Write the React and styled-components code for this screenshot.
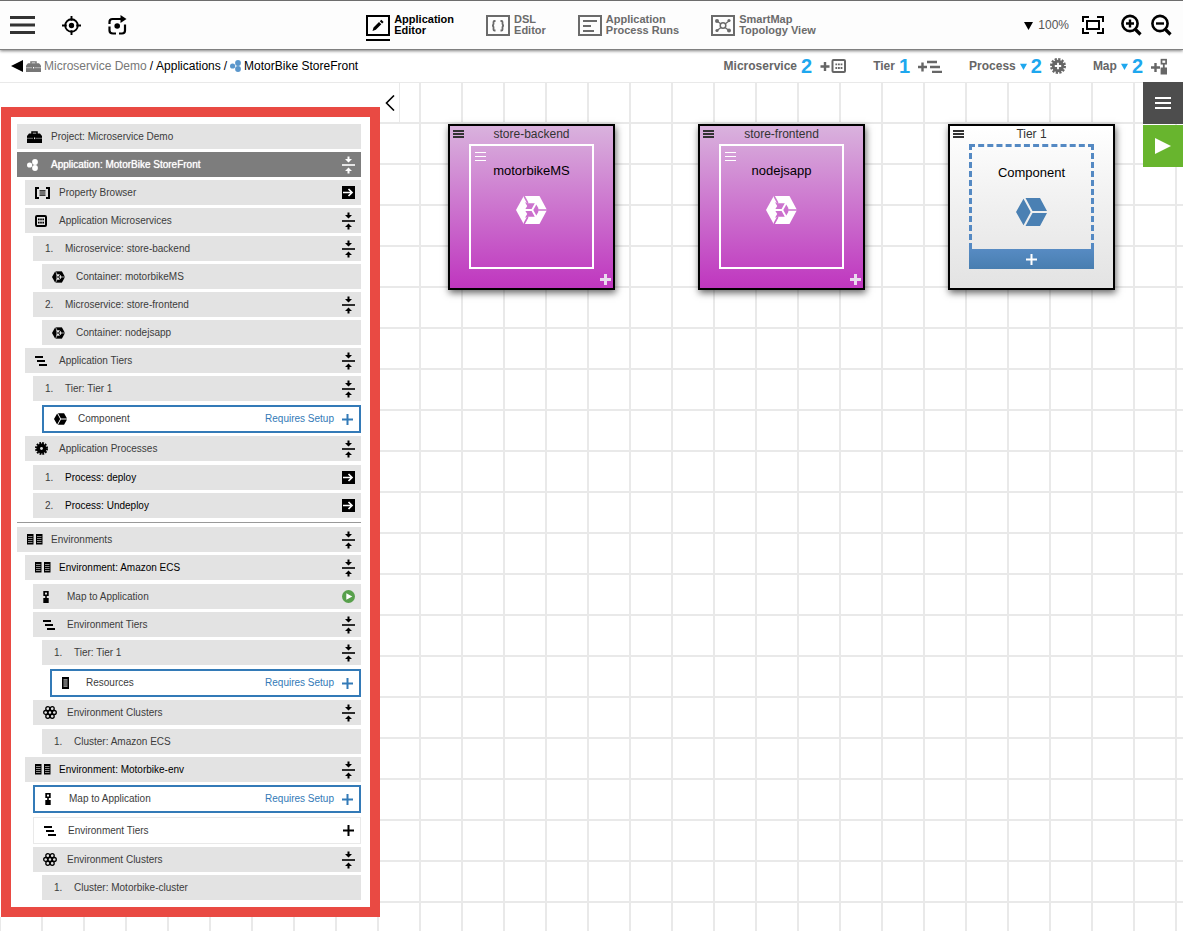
import * as React from "react"
import styled, { createGlobalStyle, css } from "styled-components"

const GlobalStyle = createGlobalStyle`
  :root {
    --color-line: #e9e9e9;
    --color-row: #e3e3e3;
    --color-blue: #337ab7;
    --color-count: #1ea7ee;
    --color-frame: #e94a43;
  }
  * {
    box-sizing: border-box;
  }
  body {
    margin: 0;
    background: #fff;
    font-family: "Liberation Sans", Arial, sans-serif;
    font-size: 12px;
    color: #000;
  }
  button {
    font: inherit;
    color: inherit;
    background: transparent;
    border: none;
    padding: 0px;
    cursor: pointer;
  }
  a {
    color: inherit;
    text-decoration: none;
  }
  svg {
    display: block;
    flex: none;
  }
`

const Page = styled.div`
  display: flex;
  flex-direction: column;
  min-height: 100vh;
`

/* ---------- top bar ---------- */

const TopBar = styled.header`
  display: grid;
  grid-template-columns: 1fr auto 1fr;
  align-items: center;
  height: 50px;
  padding: 0px 11px 0px 10px;
  background: #fdfdfd;
  border-top: 1px solid #6d6d6d;
  border-bottom: 1px solid #808080;
  box-shadow: 0px 1px 3px rgba(0, 0, 0, 0.5);
  position: relative;
  z-index: 2;
`

const TopGroup = styled.div`
  display: flex;
  align-items: center;
  gap: ${props => props.$gap}px;
  justify-content: ${props => (props.$end ? "flex-end" : "flex-start")};
`

const IconButton = styled.button`
  display: flex;
  align-items: center;
  justify-content: center;
`

const Tabs = styled.nav`
  display: flex;
  align-items: flex-start;
  gap: 32px;
`

const Tab = styled.a`
  display: flex;
  align-items: flex-start;
  gap: 4px;
  height: 24px;
  padding-top: 1px;
  font-size: 11px;
  font-weight: bold;
  line-height: 11px;
  white-space: pre-line;
  color: ${props => (props.$active ? "#000" : "#6b6b6b")};
`

const TabIcon = styled.span`
  padding: 1px 0px 3px 0px;
  border-bottom: 2px solid ${props => (props.$active ? "#000" : "transparent")};
`

const ZoomButton = styled.button`
  display: flex;
  align-items: center;
  gap: 5px;
  color: #555;
`

/* ---------- sub bar ---------- */

const SubBar = styled.div`
  display: flex;
  align-items: center;
  justify-content: space-between;
  height: 32px;
  padding: 0px 16px 0px 11px;
  background: #fff;
`

const Crumbs = styled.nav`
  display: flex;
  align-items: center;
  gap: 3px;
`

const Crumb = styled.a`
  display: flex;
  align-items: center;
  gap: 3px;
  color: ${props => (props.$muted ? "#777" : "#000")};
`

const Counters = styled.div`
  display: flex;
  align-items: center;
  gap: 27px;
`

const Counter = styled.button`
  display: flex;
  align-items: center;
  gap: 4px;
  height: 24px;
  font-weight: bold;
  color: #666;
  svg:last-child {
    margin-left: 4px;
  }
`

const Count = styled.span`
  font-size: 20px;
  line-height: 20px;
  color: var(--color-count);
`

/* ---------- canvas ---------- */

const Canvas = styled.main`
  flex: 1;
  display: flex;
  align-items: flex-start;
  background-color: #fff;
  background-image: linear-gradient(var(--color-line) 2px, transparent 2px),
    linear-gradient(90deg, var(--color-line) 2px, transparent 2px);
  background-size: 42px 41px;
  background-position: -1px -1px;
`

const Sidebar = styled.aside`
  flex: none;
  display: flex;
  align-items: flex-start;
`

const SidebarColumn = styled.div`
  width: 380px;
  padding: 24px 0px 0px 1px;
  background: #fff;
  border-top: 1px solid var(--color-line);
`

const CollapseButton = styled.button`
  display: flex;
  align-items: center;
  justify-content: center;
  width: 20px;
  height: 40px;
  background: #fff;
  border-top: 1px solid var(--color-line);
  border-right: 1px solid var(--color-line);
`

const Frame = styled.div`
  border: 10px solid var(--color-frame);
  padding: 7px 9px 7px 6px;
`

const Tree = styled.ul`
  list-style: none;
  margin: 0px;
  padding: 0px;
  display: flex;
  flex-direction: column;
  gap: 3px;
`

const indents = [0, 8, 16, 25, 33]

const rowKinds = {
  plain: css`
    height: 25px;
    background: var(--color-row);
    color: #3c3c3c;
  `,
  active: css`
    height: 25px;
    background: #7d7d7d;
    color: #fff;
    text-shadow: 0px 0px 1px #fff;
  `,
  setup: css`
    height: 28px;
    background: #fff;
    border: 2px solid var(--color-blue);
    color: #3c3c3c;
  `,
  empty: css`
    height: 27px;
    background: #fff;
    border: 1px solid var(--color-line);
    color: #3c3c3c;
  `,
}

const Row = styled.li`
  display: flex;
  align-items: center;
  padding: 0px 6px 0px 10px;
  margin-left: ${props => indents[props.$level]}px;
  margin-top: ${props => (props.$lead ? 1 : 0)}px;
  font-size: 10px;
  line-height: 12px;
  ${props => rowKinds[props.$kind]}
`

const RowIcon = styled.span`
  flex: none;
  width: 24px;
`

const RowNumber = styled.span`
  flex: none;
  width: 22px;
  padding-left: 2px;
`

const RowLabel = styled.span`
  flex: 1;
  color: ${props => (props.$strong ? "#000" : "inherit")};
`

const SetupButton = styled.button`
  display: flex;
  align-items: center;
  gap: 8px;
  color: var(--color-blue);
`

const Divider = styled.li`
  height: 1px;
  margin: 1px 0px;
  background: #999;
`

const Nodes = styled.section`
  flex: 1;
  display: flex;
  flex-wrap: wrap;
  gap: 40px 83px;
  padding: 42px 0px 42px 48px;
`

const Node = styled.article`
  display: flex;
  flex-direction: column;
  width: 167px;
  height: 166px;
  border: 2px solid #000;
  background: ${props =>
    props.$tier
      ? "linear-gradient(#fff, #f0f0f0 50%, #e3e3e3)"
      : "linear-gradient(#d9b2dd, #bf36bf)"};
  box-shadow: 1px 3px 7px rgba(0, 0, 0, 0.6);
`

const NodeHead = styled.div`
  display: grid;
  grid-template-columns: 18px 1fr 18px;
  height: 18px;
  padding: 0px 3px 2px;
  align-items: center;
  justify-items: center;
  line-height: 16px;
  color: #333;
  button {
    justify-self: start;
  }
`

const NodeFoot = styled.div`
  display: flex;
  align-items: center;
  justify-content: flex-end;
  height: 19px;
  padding: 2px 2px 0px;
`

const Box = styled.div`
  display: flex;
  flex-direction: column;
  align-items: center;
  width: 125px;
  height: 125px;
  margin: 0px auto;
  border: 2px solid #fff;
  font-size: 13px;
  line-height: 16px;
`

const BoxMenu = styled.button`
  align-self: flex-start;
  margin: 6px 4px 2px;
`

const BoxName = styled.div`
  margin-bottom: 17px;
`

const DashedBox = styled(Box)`
  height: 105px;
  border: 3px dashed #5489c3;
  border-bottom: none;
  padding-top: 18px;
`

const AddBar = styled.button`
  display: flex;
  align-items: center;
  justify-content: center;
  width: 125px;
  height: 20px;
  margin: 0px auto;
  background: linear-gradient(#578bc3, #487eb0);
`

const Tools = styled.div`
  flex: none;
  display: flex;
  flex-direction: column;
  gap: 1px;
`

const ToolButton = styled.button`
  display: flex;
  align-items: center;
  justify-content: center;
  width: 40px;
  height: 42px;
  background: ${props => (props.$run ? "#68b52e" : "#4d4d4d")};
`

/* ---------- icons ---------- */

const Bars = ({ width, height, bar, color }) => (
  <svg width={width} height={height} fill={color}>
    <rect width={width} height={bar} />
    <rect y={(height - bar) / 2} width={width} height={bar} />
    <rect y={height - bar} width={width} height={bar} />
  </svg>
)

const Triangle = ({ dir, size = 9, color = "#000" }) => {
  const d = {
    down: "M0 1h10L5 10z",
    left: "M10 0v10L0 5z",
    right: "M0 0l10 5L0 10z",
  }[dir]
  return (
    <svg width={size} height={size} viewBox="0 0 10 10" fill={color}>
      <path d={d} />
    </svg>
  )
}

const Plus = ({ size = 11, bar = 2, color = "#000" }) => (
  <svg width={size} height={size} fill={color}>
    <rect x={(size - bar) / 2} width={bar} height={size} />
    <rect y={(size - bar) / 2} width={size} height={bar} />
  </svg>
)

const CrosshairIcon = () => (
  <svg width="19" height="19" viewBox="0 0 20 20" fill="none" stroke="#000" strokeWidth="2">
    <circle cx="10" cy="10" r="6.6" />
    <circle cx="10" cy="10" r="2.8" fill="#000" stroke="none" />
    <path d="M10 0v5M10 15v5M0 10h5M15 10h5" />
  </svg>
)

const RefreshIcon = () => (
  <svg width="19" height="20" viewBox="0 0 19 20" fill="none" stroke="#000" strokeWidth="2.200">
    <path d="M1.500 9V7Q1.500 4 4.500 4H14" />
    <path d="M12.500 0l6 4-6 4z" fill="#000" stroke="none" />
    <path d="M17 9.500V15.500Q17 18.500 14 18.500H11M8 18.500H5Q1.500 18.500 1.500 15.500V11.500" />
    <circle cx="9.200" cy="11" r="2.800" fill="#000" stroke="none" />
  </svg>
)

const EditorIcon = () => (
  <svg width="24" height="21" viewBox="0 0 24 21">
    <rect x="1" y="1" width="22" height="19" fill="none" stroke="#000" strokeWidth="2" />
    <path d="M6.500 16l1-3.500 5.500-5.500 2.300 2.300-5.500 5.500zM13.800 6.200l1.500-1.500 2.300 2.300-1.500 1.500z" />
  </svg>
)

const DslIcon = () => (
  <svg width="24" height="21" viewBox="0 0 24 21" fill="none" stroke="#6b6b6b">
    <rect x="1" y="1" width="22" height="19" strokeWidth="2" />
    <path
      d="M9.500 6H8.500Q7.500 6 7.500 7V9Q7.500 10.500 6 10.500Q7.500 10.500 7.500 12V14.500Q7.500 15.500 8.500 15.500H9.500M14.500 6H15.500Q16.500 6 16.500 7V9Q16.500 10.500 18 10.500Q16.500 10.500 16.500 12V14.500Q16.500 15.500 15.500 15.500H14.500"
      strokeWidth="1.800"
    />
  </svg>
)

const RunsIcon = () => (
  <svg width="24" height="21" viewBox="0 0 24 21" fill="none" stroke="#6b6b6b" strokeWidth="2">
    <rect x="1" y="1" width="22" height="19" />
    <path d="M5 6h14M5 11h8M5 16h11" />
  </svg>
)

const SmartMapIcon = () => (
  <svg width="24" height="21" viewBox="0 0 24 21" fill="none" stroke="#6b6b6b">
    <rect x="1" y="1" width="22" height="19" strokeWidth="2" />
    <circle cx="12" cy="10.500" r="2.800" strokeWidth="1.500" />
    <path d="M6 6l4 3M18 6l-4 3M6 15.500l4-3M18 15.500l-4-3" strokeWidth="1.300" />
    <g fill="#6b6b6b" stroke="none">
      <circle cx="6" cy="6" r="2" />
      <circle cx="18" cy="5.500" r="1.600" />
      <circle cx="6" cy="15.500" r="1.600" />
      <circle cx="18" cy="15.500" r="2" />
    </g>
  </svg>
)

const FitIcon = () => (
  <svg width="22" height="18" viewBox="0 0 22 18" fill="none" stroke="#000" strokeWidth="2">
    <path d="M1 6V1H7M15 1H21V6M21 12V17H15M7 17H1V12" />
    <rect x="5" y="5" width="12" height="8" />
  </svg>
)

const MagnifierIcon = ({ plus }) => (
  <svg width="21" height="22" viewBox="0 0 21 22" fill="none" stroke="#000">
    <circle cx="9" cy="9.500" r="7.600" strokeWidth="2.600" />
    <path d="M14.500 15.500l5 5" strokeWidth="3.200" />
    <path d={plus ? "M5 9.500h8M9 5.500v8" : "M5 9.500h8"} strokeWidth="2.400" />
  </svg>
)

const BriefcaseIcon = ({ color = "#000", gap = "#e3e3e3", height = 12 }) => (
  <svg width="15" height={height} viewBox="0 0 15 12" preserveAspectRatio="none">
    <path d="M5 3V1H10V3" fill="none" stroke={color} strokeWidth="1.500" />
    <path d="M2 2.500H13L15 5V12H0V5z" fill={color} />
    <path d="M0 7.300H6M9 7.300H15" stroke={gap} strokeWidth="0.500" />
    <rect x="7" y="6.500" width="1.200" height="1.600" fill={gap} />
  </svg>
)

const AppIcon = ({ color }) => (
  <svg width="11" height="12" viewBox="0 0 11 12" fill={color}>
    <circle cx="2.600" cy="6" r="2.600" />
    <circle cx="8" cy="3" r="2.900" />
    <circle cx="8" cy="9" r="2.900" />
  </svg>
)

const PropertyIcon = () => (
  <svg width="15" height="12" viewBox="0 0 15 12" fill="none" stroke="#000">
    <path d="M4 1H1V11H4M11 1H14V11H11" strokeWidth="2" />
    <path d="M4.500 3.800H10.500M4.500 6H10.500M4.500 8.200H10.500" strokeWidth="1.200" />
  </svg>
)

const MicroserviceIcon = () => (
  <svg width="12" height="12" viewBox="0 0 12 12">
    <rect x="1" y="1" width="10" height="10" rx="1" fill="none" stroke="#000" strokeWidth="2" />
    <g>
      {[3, 5.2, 7.4].map(x =>
        [3.5, 6.7].map(y => <rect key={`${x}-${y}`} x={x} y={y} width="1.600" height="1.800" />)
      )}
    </g>
  </svg>
)

const TiersIcon = () => (
  <svg width="12" height="10" viewBox="0 0 12 10">
    <rect x="0" y="0" width="8" height="2" />
    <rect x="2" y="4" width="8" height="2" />
    <rect x="4" y="8" width="8" height="2" />
  </svg>
)

const GearIcon = ({ size = 13, color = "#000", plus }) => (
  <svg width={size} height={size} viewBox="0 0 16 16">
    <circle cx="8" cy="8" r="6.200" fill={color} />
    <circle
      cx="8"
      cy="8"
      r="6.800"
      fill="none"
      stroke={color}
      strokeWidth="2.400"
      strokeDasharray="2.200 1.360"
    />
    {plus ? (
      <path d="M8 4.800v6.400M4.800 8h6.400" stroke="#fff" strokeWidth="1.800" />
    ) : (
      <circle cx="8" cy="8" r="1.700" fill="#e3e3e3" />
    )}
  </svg>
)

const MapIcon = ({ hole = "#e3e3e3" }) => (
  <svg width="6" height="12" viewBox="0 0 6 12">
    <rect x="0.300" width="5.400" height="5" />
    <rect x="2.200" y="4" width="1.600" height="4" />
    <rect x="0.300" y="7" width="5.400" height="5" />
    <rect x="2" y="1.600" width="2" height="1.900" fill={hole} />
  </svg>
)

const ServerIcon = () => (
  <svg width="7" height="12" viewBox="0 0 7 12">
    <rect width="7" height="12" fill="#000" />
    <rect x="1.500" y="2" width="4" height="8" fill="#888" />
    <path d="M1 4h5M1 6h5M1 8h5" stroke="#333" strokeWidth="0.700" />
  </svg>
)

const ServersIcon = () => (
  <svg width="16" height="11" viewBox="0 0 16 11">
    {[0, 9].map(x => (
      <g key={x} transform={`translate(${x} 0)`}>
        <rect width="6.500" height="10.500" fill="#000" />
        <path d="M1 2.500h4.500M1 4.500h4.500M1 6.500h4.500M1 8.500h4.500" stroke="#999" strokeWidth="0.900" />
      </g>
    ))}
  </svg>
)

const ClusterIcon = () => (
  <svg width="14" height="13" viewBox="0 0 14 13" fill="none" stroke="#000" strokeWidth="1.300">
    <circle cx="7" cy="6.500" r="2" />
    <circle cx="2.700" cy="6.500" r="2" />
    <circle cx="11.300" cy="6.500" r="2" />
    <circle cx="4.800" cy="2.700" r="2" />
    <circle cx="9.200" cy="2.700" r="2" />
    <circle cx="4.800" cy="10.300" r="2" />
    <circle cx="9.200" cy="10.300" r="2" />
  </svg>
)

const CubeIcon = ({ width = 31, height = 28, color = "#000" }) => (
  <svg width={width} height={height} viewBox="0 0 31 28" fill={color}>
    <path d="M0 14L7.500 0.700L14.700 14L7.500 27.300zM9.500 0H24L31 13H16.500zM16.500 15H31L24 28H9.500z" />
  </svg>
)

const ContainerIcon = ({ width = 31, height = 28, color = "#000" }) => {
  const id = React.useId()
  return (
    <svg width={width} height={height} viewBox="0 0 31 28">
      <mask id={id}>
        <rect width="31" height="28" fill="#fff" />
        <path d="M8 0L11.800 7M22 14H31M8 28L11.800 21" stroke="#000" strokeWidth="1.600" fill="none" />
        <path d="M9 6.300L12 7.200H18.800L15.600 13H9.400L11.200 10z" />
        <path d="M9 21.700L12 20.800H18.800L15.600 15H9.400L11.200 18z" />
        <path d="M17.300 14L20.300 8.600L22.300 12V16L20.300 19.400z" />
      </mask>
      <path d="M0 14L7.700 0H23.500L31 14L23.500 28H7.700z" fill={color} mask={`url(#${id})`} />
    </svg>
  )
}

const CollapseIcon = ({ color = "#000" }) => (
  <svg width="13" height="18" viewBox="0 0 13 18" fill={color}>
    <rect y="8.200" width="13" height="1.600" />
    <path d="M5.500 0.500h2v2.500H10L6.500 6.500L3 3h2.500z" />
    <path d="M5.500 17.500h2V15H10L6.500 11.500L3 15h2.500z" />
  </svg>
)

const GoIcon = () => (
  <svg width="13" height="13" viewBox="0 0 13 13">
    <rect width="13" height="13" fill="#000" />
    <path d="M1 6.500h9M6.500 3l3.500 3.500L6.500 10" fill="none" stroke="#fff" strokeWidth="1.700" />
  </svg>
)

const RunIcon = () => (
  <svg width="13" height="13" viewBox="0 0 13 13">
    <circle cx="6.500" cy="6.500" r="6.500" fill="#58a04c" />
    <path d="M4.300 3.300l6 3.200-6 3.200z" fill="#fff" />
  </svg>
)

const ChevronLeft = () => (
  <svg width="10" height="16" viewBox="0 0 10 16" fill="none" stroke="#000" strokeWidth="1.600">
    <path d="M9 0.500L1.500 8L9 15.500" />
  </svg>
)

const AddMicroserviceIcon = () => (
  <svg width="26" height="14" viewBox="0 0 26 14">
    <path d="M5 3v9M0.500 7.500h9" stroke="#666" strokeWidth="2.400" />
    <rect x="12.500" y="1" width="12.500" height="12" rx="1" fill="none" stroke="#666" strokeWidth="2" />
    <path d="M15.400 5.300h7M15.400 9h7" stroke="#666" strokeWidth="1.800" strokeDasharray="1.800 0.800" />
  </svg>
)

const AddTierIcon = () => (
  <svg width="24" height="13" viewBox="0 0 24 13" stroke="#666" strokeWidth="2.400">
    <path d="M4.500 2.500v9M0 7h9M9 2h10M12 7h10M14 12h10" />
  </svg>
)

const AddMapIcon = () => (
  <svg width="16" height="17" viewBox="0 0 16 17" stroke="#666" fill="none">
    <path d="M4.500 5v9M0 9.500h9" strokeWidth="2.400" />
    <rect x="10.500" y="1.700" width="4.600" height="4" strokeWidth="1.700" />
    <path d="M12.800 6v4" strokeWidth="1.800" />
    <rect x="9.600" y="9.500" width="6.400" height="7" fill="#666" stroke="none" />
  </svg>
)

/* ---------- data ---------- */

const tabs = [
  { label: "Application\nEditor", icon: <EditorIcon />, active: true },
  { label: "DSL\nEditor", icon: <DslIcon /> },
  { label: "Application\nProcess Runs", icon: <RunsIcon /> },
  { label: "SmartMap\nTopology View", icon: <SmartMapIcon /> },
]

const counters = [
  { label: "Microservice", count: 2, icon: <AddMicroserviceIcon /> },
  { label: "Tier", count: 1, icon: <AddTierIcon /> },
  { label: "Process", count: 2, icon: <GearIcon size={16} color="#666" plus />, menu: true },
  { label: "Map", count: 2, icon: <AddMapIcon />, menu: true },
]

const rows = [
  { level: 0, icon: <BriefcaseIcon />, label: "Project: Microservice Demo" },
  {
    level: 0,
    icon: <AppIcon color="#fff" />,
    label: "Application: MotorBike StoreFront",
    kind: "active",
    action: "collapse",
  },
  { level: 1, icon: <PropertyIcon />, label: "Property Browser", action: "go" },
  { level: 1, icon: <MicroserviceIcon />, label: "Application Microservices", action: "collapse" },
  { level: 2, number: "1.", label: "Microservice: store-backend", action: "collapse" },
  { level: 3, icon: <ContainerIcon width={13} height={12} />, label: "Container: motorbikeMS" },
  { level: 2, number: "2.", label: "Microservice: store-frontend", action: "collapse" },
  { level: 3, icon: <ContainerIcon width={13} height={12} />, label: "Container: nodejsapp" },
  { level: 1, icon: <TiersIcon />, label: "Application Tiers", action: "collapse" },
  { level: 2, number: "1.", label: "Tier: Tier 1", action: "collapse" },
  { level: 3, icon: <CubeIcon width={13} height={12} />, label: "Component", kind: "setup", lead: true },
  { level: 1, icon: <GearIcon />, label: "Application Processes", action: "collapse" },
  { level: 2, number: "1.", label: "Process: deploy", action: "go", strong: true, lead: true },
  { level: 2, number: "2.", label: "Process: Undeploy", action: "go", strong: true },
  { divider: true },
  { level: 0, icon: <ServersIcon />, label: "Environments", action: "collapse" },
  { level: 1, icon: <ServersIcon />, label: "Environment: Amazon ECS", action: "collapse", strong: true },
  { level: 2, icon: <MapIcon />, label: "Map to Application", action: "run", lead: true },
  { level: 2, icon: <TiersIcon />, label: "Environment Tiers", action: "collapse" },
  { level: 3, number: "1.", label: "Tier: Tier 1", action: "collapse" },
  { level: 4, icon: <ServerIcon />, label: "Resources", kind: "setup", lead: true },
  { level: 2, icon: <ClusterIcon />, label: "Environment Clusters", action: "collapse" },
  { level: 3, number: "1.", label: "Cluster: Amazon ECS", lead: true },
  { level: 1, icon: <ServersIcon />, label: "Environment: Motorbike-env", action: "collapse", strong: true },
  { level: 2, icon: <MapIcon hole="#fff" />, label: "Map to Application", kind: "setup" },
  { level: 2, icon: <TiersIcon />, label: "Environment Tiers", kind: "empty", action: "add", lead: true },
  { level: 2, icon: <ClusterIcon />, label: "Environment Clusters", action: "collapse" },
  { level: 3, number: "1.", label: "Cluster: Motorbike-cluster" },
]

const microservices = [
  { name: "store-backend", container: "motorbikeMS" },
  { name: "store-frontend", container: "nodejsapp" },
]

const RowAction = ({ row }) => {
  if (row.kind === "setup") {
    return (
      <SetupButton>
        Requires Setup <Plus color="#337ab7" />
      </SetupButton>
    )
  }
  const icons = {
    collapse: <CollapseIcon color={row.kind === "active" ? "#fff" : "#000"} />,
    go: <GoIcon />,
    run: <RunIcon />,
    add: <Plus />,
  }
  return row.action ? (
    <IconButton aria-label={`${row.action} ${row.label}`}>{icons[row.action]}</IconButton>
  ) : null
}

const NodeTitle = ({ name }) => (
  <NodeHead>
    <IconButton aria-label={`${name} menu`}>
      <Bars width={11} height={8} bar={2} color="#333" />
    </IconButton>
    {name}
  </NodeHead>
)

const App = () => (
  <Page>
    <GlobalStyle />
    <TopBar>
      <TopGroup $gap={27}>
        <IconButton aria-label="Menu">
          <Bars width={25} height={18} bar={3} color="#333" />
        </IconButton>
        <IconButton aria-label="Center">
          <CrosshairIcon />
        </IconButton>
        <IconButton aria-label="Refresh">
          <RefreshIcon />
        </IconButton>
      </TopGroup>
      <Tabs>
        {tabs.map(tab => (
          <Tab key={tab.label} href="#" $active={tab.active}>
            <TabIcon $active={tab.active}>{tab.icon}</TabIcon>
            {tab.label}
          </Tab>
        ))}
      </Tabs>
      <TopGroup $gap={17} $end>
        <TopGroup $gap={13}>
          <ZoomButton>
            <Triangle dir="down" /> 100%
          </ZoomButton>
          <IconButton aria-label="Fit to screen">
            <FitIcon />
          </IconButton>
        </TopGroup>
        <TopGroup $gap={9}>
          <IconButton aria-label="Zoom in">
            <MagnifierIcon plus />
          </IconButton>
          <IconButton aria-label="Zoom out">
            <MagnifierIcon />
          </IconButton>
        </TopGroup>
      </TopGroup>
    </TopBar>

    <SubBar>
      <Crumbs>
        <IconButton aria-label="Back">
          <Triangle dir="left" size={12} />
        </IconButton>
        <Crumb href="#" $muted>
          <BriefcaseIcon color="#777" gap="#fff" height={11} /> Microservice Demo
        </Crumb>
        <span>/</span>
        <Crumb href="#">Applications</Crumb>
        <span>/</span>
        <Crumb href="#">
          <AppIcon color="#5b97cc" /> MotorBike StoreFront
        </Crumb>
      </Crumbs>
      <Counters>
        {counters.map(counter => (
          <Counter key={counter.label}>
            {counter.label}
            {counter.menu ? <Triangle dir="down" size={7} color="#1ea7ee" /> : null}
            <Count>{counter.count}</Count>
            {counter.icon}
          </Counter>
        ))}
      </Counters>
    </SubBar>

    <Canvas>
      <Sidebar>
        <SidebarColumn>
          <Frame>
            <Tree>
              {rows.map((row, i) =>
                row.divider ? (
                  <Divider key={i} />
                ) : (
                  <Row key={i} $level={row.level} $kind={row.kind || "plain"} $lead={row.lead}>
                    {row.number ? <RowNumber>{row.number}</RowNumber> : <RowIcon>{row.icon}</RowIcon>}
                    <RowLabel $strong={row.strong}>{row.label}</RowLabel>
                    <RowAction row={row} />
                  </Row>
                )
              )}
            </Tree>
          </Frame>
        </SidebarColumn>
        <CollapseButton aria-label="Hide panel">
          <ChevronLeft />
        </CollapseButton>
      </Sidebar>

      <Nodes>
        {microservices.map(item => (
          <Node key={item.name}>
            <NodeTitle name={item.name} />
            <Box>
              <BoxMenu aria-label={`${item.container} menu`}>
                <Bars width={11} height={9} bar={1} color="#fff" />
              </BoxMenu>
              <BoxName>{item.container}</BoxName>
              <ContainerIcon color="#fff" />
            </Box>
            <NodeFoot>
              <IconButton aria-label={`Add to ${item.name}`}>
                <Plus bar={3} color="#e9d9ee" />
              </IconButton>
            </NodeFoot>
          </Node>
        ))}
        <Node $tier>
          <NodeTitle name="Tier 1" />
          <DashedBox>
            <BoxName>Component</BoxName>
            <CubeIcon color="#4a80b3" />
          </DashedBox>
          <AddBar aria-label="Add component">
            <Plus color="#fff" bar={2} />
          </AddBar>
        </Node>
      </Nodes>

      <Tools>
        <ToolButton aria-label="Open menu">
          <Bars width={16} height={12} bar={2} color="#fff" />
        </ToolButton>
        <ToolButton $run aria-label="Run">
          <Triangle dir="right" size={16} color="#fff" />
        </ToolButton>
      </Tools>
    </Canvas>
  </Page>
)

export default App
